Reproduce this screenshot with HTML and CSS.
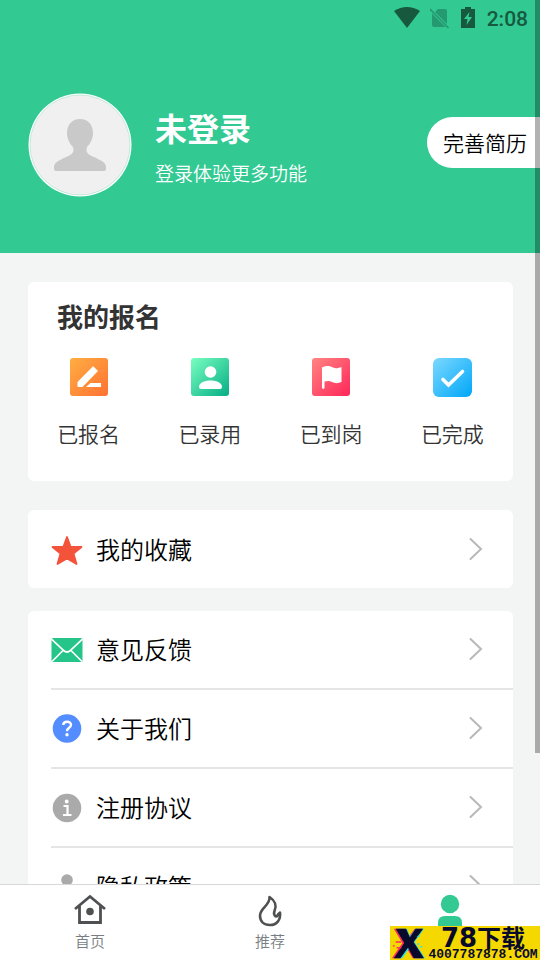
FILE: index.html
```html
<!DOCTYPE html>
<html lang="zh-CN">
<head>
<meta charset="utf-8">
<meta name="viewport" content="width=device-width, initial-scale=1">
<title>我的</title>
<link rel="stylesheet" href="styles.css">
</head>
<body>
<main class="page">
  <header class="hero">
    <div class="status">
      <svg width="28" height="24" viewBox="0 0 28 24"><path d="M1 4Q14-4 27 4L14 21Z" fill="#17593f"/></svg>
      <svg width="22" height="24" viewBox="0 0 22 24"><path d="M8 2H15Q17 2 17 4V17L5 5ZM2 6.500L15.500 20H4Q2 20 2 18Z" fill="#259a70"/><path d="M0 2L18.500 21" stroke="#259a70" stroke-width="1.600"/></svg>
      <svg class="battery" width="14" height="24" viewBox="0 0 14 24"><path d="M4 0H10V2H14V21H0V2H4Z" fill="#17593f"/><path d="M8.500 5L3 12H6.500L5.500 18L11 10H7.500Z" fill="#32c993"/></svg>
      <time class="clock">2:08</time>
    </div>
    <div class="profile">
      <svg class="avatar" width="104" height="104" viewBox="0 0 104 104"><circle cx="52" cy="52" r="51.500" fill="#fff"/><circle cx="52" cy="52" r="50" fill="#f0f0f0" stroke="#aee5cf" stroke-width=".7"/><path d="M52 26C44 26 39 32 39 40C39 46 42 51 45 54C47 60 43 62 38 64C32 67 26 69 26 74V76Q26 78 28 78H76Q78 78 78 76V74C78 69 72 67 66 64C61 62 57 60 59 54C62 51 65 46 65 40C65 32 60 26 52 26Z" fill="#c9c9c9"/></svg>
      <div class="who">
        <h1 class="name">未登录</h1>
        <p class="hint">登录体验更多功能</p>
      </div>
      <button class="resume" type="button">完善简历</button>
    </div>
  </header>

  <section class="card applications">
    <h2 class="card-title">我的报名</h2>
    <div class="stats">
      <a class="stat" href="#applied">
        <svg width="40" height="40" viewBox="0 0 40 40"><defs><linearGradient id="orange" x1="0" y1="0" x2="1" y2="1"><stop stop-color="#ffae42"/><stop offset="1" stop-color="#ff7133"/></linearGradient></defs><rect x="1" y="1" width="38" height="38" rx="3" fill="url(#orange)"/><path d="M24.500 9.500L28.500 13.500Q29 14 28.500 14.500L13.500 30H8.500V25L23.500 9.800Q24 9 24.500 9.500ZM17 30L21.500 26H32V30Z" fill="#fff"/></svg>
        <span>已报名</span>
      </a>
      <a class="stat" href="#hired">
        <svg width="40" height="40" viewBox="0 0 40 40"><defs><linearGradient id="green" x1="0" y1="0" x2="1" y2="1"><stop stop-color="#79ffc1"/><stop offset="1" stop-color="#05ad84"/></linearGradient></defs><rect x="1" y="1" width="38" height="38" rx="3" fill="url(#green)"/><circle cx="20.500" cy="15" r="5.800" fill="#fff"/><path d="M9 30C9 26 14 23.500 20.500 23.500S32 26 32 30Q32 32 30 32H11Q9 32 9 30Z" fill="#fff"/></svg>
        <span>已录用</span>
      </a>
      <a class="stat" href="#arrived">
        <svg width="40" height="40" viewBox="0 0 40 40"><defs><linearGradient id="red" x1="0" y1="0" x2="1" y2="1"><stop stop-color="#ff8582"/><stop offset="1" stop-color="#ff2659"/></linearGradient></defs><rect x="1" y="1" width="38" height="38" rx="3" fill="url(#red)"/><path d="M11 10.500C16 8 19 9 22 10.500C25 12 27 11 30.500 10V25C27 26.500 24 26.500 21 25C18 23.500 16 24 13.500 24.500V31Q12.300 33 11 31Z" fill="#fff"/></svg>
        <span>已到岗</span>
      </a>
      <a class="stat" href="#completed">
        <svg width="40" height="40" viewBox="0 0 40 40"><defs><linearGradient id="blue" x1="0" y1="0" x2="1" y2="1"><stop stop-color="#7cd8ff"/><stop offset="1" stop-color="#00a7f8"/></linearGradient></defs><rect x="1" y="1" width="39" height="39" rx="6" fill="url(#blue)"/><path d="M11 22.500L16.500 28L30.500 14.500" fill="none" stroke="#fff" stroke-width="3.600" stroke-linecap="round"/></svg>
        <span>已完成</span>
      </a>
    </div>
  </section>

  <nav class="card favorites">
    <a class="row" href="#favorites">
      <svg class="icon" width="32" height="32" viewBox="0 0 32 32"><path d="M16 4L19.700 14H30.500L22.500 20.500L25.500 31L16 25.500L6.500 31L9.500 20.500L1.500 14H12.300Z" fill="#f4533b" stroke="#f4533b" stroke-width="1.800" stroke-linejoin="round"/></svg>
      <span class="label">我的收藏</span>
      <svg class="chevron" width="14" height="24" viewBox="0 0 14 24"><path d="M1.500 2L12 12L1.500 22" fill="none" stroke="#b8b8b8" stroke-width="2" stroke-linecap="round"/></svg>
    </a>
  </nav>

  <nav class="card menu">
    <a class="row" href="#feedback">
      <svg class="icon" width="32" height="32" viewBox="0 0 32 32"><rect x=".5" y="5" width="31" height="24" rx="1.500" fill="#25c58a"/><path d="M.5 6L12.500 17.300Q16 20.700 19.500 17.300L31.500 6M1 28.500L12 17.500M31 28.500L20 17.500" fill="none" stroke="#fff" stroke-width="1.700"/></svg>
      <span class="label">意见反馈</span>
      <svg class="chevron" width="14" height="24" viewBox="0 0 14 24"><path d="M1.500 2L12 12L1.500 22" fill="none" stroke="#b8b8b8" stroke-width="2" stroke-linecap="round"/></svg>
    </a>
    <a class="row" href="#about">
      <svg class="icon" width="32" height="32" viewBox="0 0 32 32"><circle cx="16" cy="16.500" r="14.300" fill="#548dff"/><path d="M12.300 13C12.300 8.800 20 8.500 20 12.800C20 16 16 15.500 16 19.200" fill="none" stroke="#fff" stroke-width="2.400"/><circle cx="16" cy="22.800" r="1.700" fill="#fff"/></svg>
      <span class="label">关于我们</span>
      <svg class="chevron" width="14" height="24" viewBox="0 0 14 24"><path d="M1.500 2L12 12L1.500 22" fill="none" stroke="#b8b8b8" stroke-width="2" stroke-linecap="round"/></svg>
    </a>
    <a class="row" href="#agreement">
      <svg class="icon" width="32" height="32" viewBox="0 0 32 32"><circle cx="16" cy="17" r="14.300" fill="#aaa"/><circle cx="15.700" cy="10.500" r="1.900" fill="#fff"/><path d="M12.500 15H16.500V24M12 24H20.500" fill="none" stroke="#fff" stroke-width="2.200"/></svg>
      <span class="label">注册协议</span>
      <svg class="chevron" width="14" height="24" viewBox="0 0 14 24"><path d="M1.500 2L12 12L1.500 22" fill="none" stroke="#b8b8b8" stroke-width="2" stroke-linecap="round"/></svg>
    </a>
    <a class="row" href="#privacy">
      <svg class="icon" width="32" height="32" viewBox="0 0 32 32"><circle cx="16" cy="10" r="5.800" fill="#aaa"/><path d="M4 30C4 21 9 18 16 18S28 21 28 30Z" fill="#aaa"/></svg>
      <span class="label">隐私政策</span>
      <svg class="chevron" width="14" height="24" viewBox="0 0 14 24"><path d="M1.500 2L12 12L1.500 22" fill="none" stroke="#b8b8b8" stroke-width="2" stroke-linecap="round"/></svg>
    </a>
  </nav>
</main>

<nav class="tabs">
  <a class="tab" href="#home">
    <svg width="36" height="36" viewBox="0 0 36 36"><path d="M3 18L18 5.500L33 18M7.500 15V31.500H28.500V15" fill="none" stroke="#4f5052" stroke-width="2.800"/><circle cx="18" cy="20.500" r="3.800" fill="#4f5052"/></svg>
    <span>首页</span>
  </a>
  <a class="tab" href="#recommended">
    <svg width="36" height="36" viewBox="0 0 36 36"><path d="M17.500 6C23.500 10 25 14 22.500 20C21 24 24 27 25.500 24.500Q26 23 28 21.500C29 29 24.500 34 18 34C11.500 34 8 30 8 24.500C8 17 18.500 14 17.500 6Z" fill="none" stroke="#4f5052" stroke-width="2.600" stroke-linejoin="round"/></svg>
    <span>推荐</span>
  </a>
  <a class="tab" href="#mine" aria-label="我的">
    <svg width="36" height="36" viewBox="0 0 36 36"><circle cx="18" cy="13" r="9.200" fill="#32c993"/><path d="M6 36V32Q6 25 13 25H23Q30 25 30 32V36Z" fill="#32c993"/></svg>
  </a>
</nav>

<div class="scrollbar"></div>
<aside class="watermark">
  <svg class="mark" width="36" height="34" viewBox="0 0 38 34"><path d="M4 2H16L20 10L26 2H34L24 16L35 33H24L18 23L10 33H2L13 17Z" fill="#ff2a62"/><path d="M8 2H18L21 10L27 2H36L26 16L37 33H26L20 23L13 33H5L16 17Z" fill="#24e4e8"/><path d="M6 2H17L21 11L27 2H35L25 16L36 33H25L19 22L11 33H4L15 17Z" fill="#080a2b"/><path d="M6 16H12M7 22H12M3 20H5" stroke="#ff2a62" stroke-width="1.500"/><path d="M29 18H31M32 21H34M29 10H31" stroke="#24e4e8" stroke-width="1.500"/></svg>
  <div class="brand">
    <strong class="brand-name"><span class="brand-number">78</span>下载</strong>
    <span class="brand-url">4007787878.COM</span>
  </div>
</aside>
</body>
</html>
```
FILE: styles.css
```css
* {
  box-sizing: border-box;
}

body {
  margin: 0;
  height: 100vh;
  display: flex;
  flex-direction: column;
  position: relative;
  overflow: hidden;
  background: #f3f5f5;
  color: #000;
  font-family: "Noto Sans CJK SC", sans-serif;
  font-weight: 350;
}

svg {
  display: block;
  flex: none;
}

a {
  color: inherit;
  text-decoration: none;
}

h1, h2, p {
  margin: 0;
}

.page {
  flex: 1;
  min-height: 0;
  overflow: hidden;
}

.hero {
  background: #32c993;
  padding-bottom: 56px;
}

.status {
  display: flex;
  justify-content: flex-end;
  align-items: center;
  gap: 9px;
  height: 37px;
  padding-right: 12px;
}

.battery {
  margin-right: 3px;
}

.clock {
  color: #17593f;
  font: 500 21px/24px Roboto, sans-serif;
}

.profile {
  display: flex;
  align-items: flex-start;
  padding: 56px 0 0 28px;
}

.who {
  flex: 1;
  padding: 12px 0 0 23px;
  color: #fff;
}

.name {
  font-size: 32px;
  line-height: 44px;
  font-weight: 700;
}

.hint {
  font-size: 19px;
  line-height: 48px;
}

.resume {
  height: 51px;
  margin-top: 24px;
  padding: 0 13px 0 16px;
  border: 0;
  border-radius: 26px 0 0 26px;
  background: #fff;
  color: #000;
  font: 350 21px/51px "Noto Sans CJK SC", sans-serif;
}

.card {
  margin: 0 27px 0 28px;
  border-radius: 6px;
  background: #fff;
}

.applications {
  margin-top: 29px;
  padding: 16px 0 30px;
  color: #333;
}

.card-title {
  padding-left: 29px;
  font-size: 26px;
  line-height: 36px;
  font-weight: 700;
}

.stats {
  display: grid;
  grid-template-columns: repeat(4, 1fr);
  padding-top: 23px;
}

.stat {
  display: flex;
  flex-direction: column;
  align-items: center;
  gap: 18px;
  font-size: 21px;
  line-height: 36px;
}

.favorites {
  margin-top: 29px;
}

.menu {
  margin-top: 23px;
}

.row {
  display: flex;
  align-items: center;
  height: 78px;
  margin-left: 23px;
  padding-right: 30px;
}

.menu .row {
  height: 79px;
  padding-bottom: 2px;
  border-bottom: 2px solid #e5e5e5;
}

.label {
  flex: 1;
  padding-left: 13px;
  font-size: 24px;
  line-height: 36px;
}

.tabs {
  display: grid;
  grid-template-columns: repeat(3, 1fr);
  height: 76px;
  border-top: 1px solid #d8d8d8;
  background: #fff;
}

.tab {
  display: flex;
  flex-direction: column;
  align-items: center;
  gap: 2px;
  padding-top: 6px;
  color: #7a7e83;
  font-size: 15px;
  line-height: 24px;
}

.scrollbar {
  position: absolute;
  top: 0;
  right: 0;
  width: 5px;
  height: 753px;
  background: rgba(0, 0, 0, 0.3);
}

.watermark {
  position: absolute;
  right: 0;
  bottom: 0;
  display: flex;
  width: 150px;
  height: 34px;
  background: #f5d800;
  color: #080a2b;
}

.brand {
  flex: 1;
  display: flex;
  flex-direction: column;
  align-items: center;
  white-space: nowrap;
}

.brand-name {
  font-size: 24px;
  line-height: 22px;
  font-weight: 700;
}

.brand-number {
  font-family: "DejaVu Sans", sans-serif;
  font-size: 26px;
}

.brand-url {
  font: 700 13px/12px "Liberation Mono", monospace;
}
```
